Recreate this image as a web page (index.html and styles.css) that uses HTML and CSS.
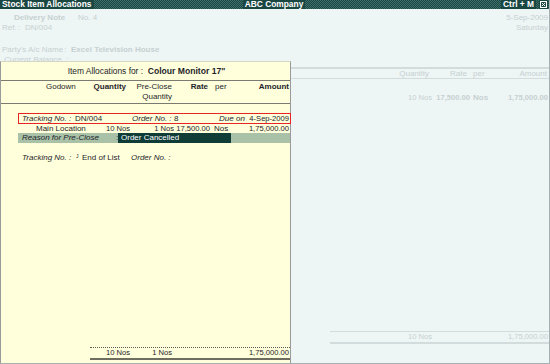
FILE: index.html
```html
<!DOCTYPE html>
<html>
<head>
<meta charset="utf-8">
<link rel="stylesheet" href="styles.css">
</head>
<body>
<div class="window">
  <div class="titlebar">
    <span class="tb-cell"><span class="tb-text tb-left">Stock Item Allocations</span></span>
    <span class="tb-text tb-center">ABC Company</span>
    <span class="tb-right">
      <span class="tb-text">Ctrl + M</span>
      <span class="closebox"><svg width="7" height="7" viewBox="0 0 7 7"><rect x="0.5" y="0.5" width="6" height="6" fill="none" stroke="#fff" stroke-width="1"/><path d="M1.8 1.8 L5.2 5.2 M5.2 1.8 L1.8 5.2" stroke="#fff" stroke-width="1"/></svg></span>
    </span>
  </div>

  <div class="bg">
    <div class="info">
      <div class="info-row r1">
        <span class="vch">Delivery Note</span><span class="vno">No. 4</span>
        <span class="date">5-Sep-2009</span>
      </div>
      <div class="info-row r2">
        <span class="ref">Ref.</span><span class="colon1">:</span><span>DN/004</span>
        <span class="day">Saturday</span>
      </div>
      <div class="info-row r3">
        <span class="party">Party's A/c Name</span><span class="colon2">:</span><span class="partyval">Excel Television House</span>
      </div>
      <div class="info-row r4">
        <span class="bal">Current Balance</span><span>:</span>
      </div>
    </div>

    <div class="bgtable">
      <div class="bg-head bg-grid">
        <span></span>
        <span class="num">Quantity</span>
        <span class="num">Rate</span>
        <span class="per">per</span>
        <span class="num">Amount</span>
      </div>
      <div class="bg-row bg-grid">
        <span></span>
        <span class="num n">10 Nos</span>
        <span class="num n b">17,500.00</span>
        <span class="per b">Nos</span>
        <span class="num n b">1,75,000.00</span>
      </div>
      <div class="bg-fill"></div>
      <div class="bg-total bg-grid">
        <span></span>
        <span class="num n">10 Nos</span>
        <span></span>
        <span></span>
        <span class="num n">1,75,000.00</span>
      </div>
    </div>
  </div>

  <div class="popup">
    <div class="pop-title">Item Allocations for : &nbsp;<b>Colour Monitor 17"</b></div>
    <div class="pop-head grid">
      <span class="h-godown">Godown</span>
      <span class="h-qty b">Quantity</span>
      <span class="h-pre">Pre-Close<br>Quantity</span>
      <span class="h-rate b">Rate</span>
      <span class="h-per">per</span>
      <span class="h-amt b">Amount</span>
    </div>

    <div class="track">
      <span class="t-label i">Tracking No. :</span>
      <span class="t-val">DN/004</span>
      <span class="t-olabel i">Order No. :</span>
      <span class="t-oval">8</span>
      <span class="t-due"><span class="i">Due on</span>&nbsp; <span class="n">4-Sep-2009</span></span>
    </div>

    <div class="loc grid">
      <span class="c-godown">Main Location</span>
      <span class="c-qty n">10 Nos</span>
      <span class="c-pre n">1 Nos</span>
      <span class="c-rate n">17,500.00</span>
      <span class="c-per">Nos</span>
      <span class="c-amt n">1,75,000.00</span>
    </div>

    <div class="reason">
      <span class="r-label i">Reason for Pre-Close</span>
      <span class="r-colon">:</span>
      <span class="r-box">Order Cancelled</span>
    </div>

    <div class="track2">
      <span class="t-label i">Tracking No. :</span>
      <span class="t-mark">J</span>
      <span class="t-eol">End of List</span>
      <span class="t-olabel i">Order No. :</span>
    </div>

    <div class="totals">
      <span class="c-qty n">10 Nos</span>
      <span class="c-pre2 n">1 Nos</span>
      <span></span>
      <span></span>
      <span class="c-amt n">1,75,000.00</span>
    </div>
  </div>
</div>
</body>
</html>
```

FILE: styles.css
```css
* { box-sizing: border-box; }
html, body { margin: 0; padding: 0; }
body {
  width: 550px;
  height: 364px;
  overflow: hidden;
  font-family: "Liberation Sans", Arial, sans-serif;
  font-size: 8px;
  color: #222230;
  background: #eef5f5;
}
.b { font-weight: bold; }
.i { font-style: italic; }
.n { font-size: 7.6px; }
span { white-space: nowrap; }

.window {
  position: relative;
  width: 550px;
  height: 364px;
  display: flex;
  flex-direction: column;
  border-right: 1px solid #a6b0b0;
  border-bottom: 1px solid #a6b0b0;
}

/* title bar */
.titlebar {
  height: 9px;
  flex: 0 0 9px;
  display: grid;
  grid-template-columns: 1fr auto 1fr;
  align-items: center;
  background-color: #1b4743;
  background-image: repeating-conic-gradient(#1b4743 0 25%, #3f6f6a 0 50%);
  background-size: 2px 2px;
  color: #fff;
  font-weight: bold;
  font-size: 8.4px;
  line-height: 9px;
  padding: 0 1px 0 0;
}
.tb-cell { display: flex; }
.tb-text { background: #1b4743; padding: 0 2px; }
.tb-left { padding-left: 2px; }
.tb-right { display: flex; align-items: center; justify-content: flex-end; gap: 3px; }
.closebox { display: flex; background: #1b4743; height: 9px; align-items: center; padding: 0 1px; }
.closebox svg { display: block; }

/* background */
.bg {
  flex: 1;
  display: flex;
  flex-direction: column;
  color: #c6d1d1;
}
.info { padding-top: 4px; }
.info-row { display: flex; height: 10px; line-height: 10px; }
.vch { padding-left: 14px; width: 78px; font-weight: bold; }
.vno { flex: 1; }
.date, .day { margin-left: auto; padding-right: 1px; }
.ref { padding-left: 2px; width: 18px; }
.colon1 { width: 7px; }
.r3 { margin-top: 12px; }
.party { padding-left: 2px; width: 64px; }
.colon2 { width: 7px; }
.partyval { font-weight: bold; }
.r4 { height: 9px; line-height: 9px; }
.bal { padding-left: 4px; width: 66px; font-style: italic; }

.bgtable {
  flex: 1;
  display: flex;
  flex-direction: column;
  margin-top: 3px;
}
.bg-grid {
  display: grid;
  grid-template-columns: 1fr 50px 38px 20px 58px;
  padding-right: 1px;
}
.bg-head {
  border-top: 2px solid #d3dcdc;
  border-bottom: 1px solid #d3dcdc;
  height: 12px;
  line-height: 10px;
}
.num { text-align: right; }
.per { padding-left: 3px; }
.bg-head .num { padding-right: 3px; }
.bg-head .num:last-child { padding-right: 1px; }
.bg-row { margin-top: 14px; line-height: 10px; }
.bg-fill { flex: 1; }
.bg-total {
  border-top: 1px solid #d3dcdc;
  border-bottom: 2px solid #d3dcdc;
  line-height: 10px;
  height: 13px;
  margin-bottom: 19px;
  margin-left: 330px;
}

/* popup */
.popup {
  position: absolute;
  left: 0;
  top: 61px;
  width: 291px;
  height: 302px;
  background: #ffffdb;
  border-left: 1px solid #9a9a9a;
  border-right: 1px solid #9a9a9a;
  border-top: 1px solid #d6d6c6;
  display: flex;
  flex-direction: column;
  color: #1e1e2c;
}
.pop-title {
  height: 19px;
  line-height: 18px;
  text-align: center;
  font-size: 8.4px;
  border-bottom: 1px solid #7a7a72;
  padding-left: 2px;
}
.pop-title b { font-size: 8.6px; }

.grid {
  display: grid;
  grid-template-columns: 90px 40px 45px 35px 19px 1fr;
  padding-right: 1px;
}
.pop-head {
  height: 23px;
  padding-top: 1px;
  line-height: 10px;
  border-bottom: 1px solid #7a7a72;
}
.h-godown { padding-left: 45px; }
.h-qty { text-align: right; padding-right: 5px; }
.h-pre { text-align: right; padding-right: 4px; }
.h-rate { text-align: right; padding-right: 3px; }
.h-per { padding-left: 4px; }
.h-amt { text-align: right; }

.track {
  margin-top: 9px;
  margin-left: 17px;
  margin-right: -1px;
  height: 11px;
  line-height: 9px;
  border: 1px solid #e82424;
  display: flex;
  padding-left: 3px;
  padding-right: 1px;
}
.t-label { width: 53px; }
.t-val { width: 57px; }
.t-olabel { width: 39px; }
.t-oval { flex: 1; padding-left: 3px; }

.loc { line-height: 9px; height: 9px; }
.c-godown { padding-left: 35px; }
.c-qty { text-align: right; padding-right: 1px; }
.c-pre { text-align: right; padding-right: 2px; }
.c-rate { text-align: right; padding-right: 1px; }
.c-per { padding-left: 3px; }
.c-amt { text-align: right; }

.reason {
  margin-left: 17px;
  height: 10px;
  line-height: 10px;
  background: #a9c2a7;
  display: flex;
  padding-left: 4px;
}
.r-label { width: 94px; }
.r-colon { width: 2px; }
.r-box {
  width: 113px;
  background: #0f3c37;
  color: #ffffff;
  padding-left: 3px;
}

.track2 {
  margin-top: 10px;
  margin-left: 18px;
  padding-left: 3px;
  display: flex;
  line-height: 10px;
  height: 10px;
}
.t-mark { width: 7px; padding-left: 1px; font-size: 5px; line-height: 6px; }
.t-eol { width: 49px; }

.totals {
  display: grid;
  grid-template-columns: 41px 45px 35px 19px 1fr;
  padding-right: 1px;
  margin-top: auto;
  margin-bottom: 3px;
  margin-left: 89px;
  border-top: 1px dotted #5a5a50;
  border-bottom: 2px solid #6e6e60;
  height: 13px;
  line-height: 10px;
}
.c-pre2 { text-align: right; padding-right: 4px; }
```
